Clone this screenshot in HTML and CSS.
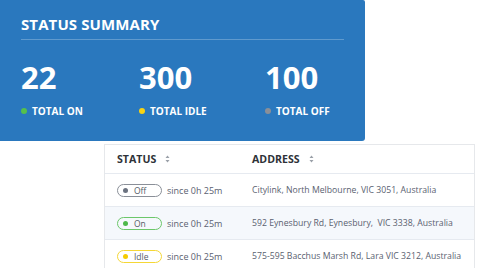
FILE: index.html
```html
<!DOCTYPE html>
<html>
<head>
<meta charset="utf-8">
<link rel="stylesheet" href="styles.css">
</head>
<body>
<section class="summary">
  <h1 class="summary-title">STATUS SUMMARY</h1>
  <div class="stats">
    <div class="stat">
      <div class="stat-value">22</div>
      <div class="stat-label"><span class="dot dot-on"></span>TOTAL ON</div>
    </div>
    <div class="stat">
      <div class="stat-value">300</div>
      <div class="stat-label"><span class="dot dot-idle"></span>TOTAL IDLE</div>
    </div>
    <div class="stat">
      <div class="stat-value">100</div>
      <div class="stat-label"><span class="dot dot-off"></span>TOTAL OFF</div>
    </div>
  </div>
</section>
<section class="table-card">
  <div class="row head">
    <div class="cell c-status">STATUS <span class="sort"><svg width="5" height="8" viewBox="0 0 5 8"><path d="M2.5 0.5 L4.5 3 L0.5 3 Z M2.5 7.5 L4.5 5 L0.5 5 Z" fill="#9aa0a8"/></svg></span></div>
    <div class="cell c-addr">ADDRESS <span class="sort"><svg width="5" height="8" viewBox="0 0 5 8"><path d="M2.5 0.5 L4.5 3 L0.5 3 Z M2.5 7.5 L4.5 5 L0.5 5 Z" fill="#9aa0a8"/></svg></span></div>
  </div>
  <div class="row">
    <div class="cell c-status"><span class="badge badge-off"><span class="bdot"></span>Off</span><span class="since">since 0h 25m</span></div>
    <div class="cell c-addr">Citylink, North Melbourne, VIC 3051, Australia</div>
  </div>
  <div class="row alt">
    <div class="cell c-status"><span class="badge badge-on"><span class="bdot"></span>On</span><span class="since">since 0h 25m</span></div>
    <div class="cell c-addr">592 Eynesbury Rd, Eynesbury,&nbsp; VIC 3338, Australia</div>
  </div>
  <div class="row">
    <div class="cell c-status"><span class="badge badge-idle"><span class="bdot"></span>Idle</span><span class="since">since 0h 25m</span></div>
    <div class="cell c-addr">575-595 Bacchus Marsh Rd, Lara VIC 3212, Australia</div>
  </div>
</section>
</body>
</html>
```
FILE: styles.css
```css
html, body {
  margin: 0;
  padding: 0;
  background: #ffffff;
  font-family: "Open Sans", "Noto Sans", sans-serif;
  width: 480px;
  height: 268px;
  overflow: hidden;
}
.summary {
  width: 365px;
  height: 141px;
  box-sizing: border-box;
  background: #2a78be;
  border-radius: 0 2px 3px 0;
  padding: 14px 21px 0 21px;
  color: #ffffff;
}
.summary-title {
  margin: 0;
  font-size: 15px;
  font-weight: 700;
  line-height: 20px;
  letter-spacing: 0.1px;
  padding-bottom: 5px;
  border-bottom: 1px solid rgba(255,255,255,0.25);
}
.stats {
  display: grid;
  grid-template-columns: 118px 126px auto;
  margin-top: 19px;
}
.stat-value {
  font-size: 31px;
  font-weight: 700;
  line-height: 36px;
}
.stat-label {
  display: flex;
  align-items: center;
  gap: 5px;
  font-size: 10px;
  font-weight: 700;
  margin-top: 10px;
  line-height: 12px;
}
.dot {
  width: 6px;
  height: 6px;
  border-radius: 50%;
  display: inline-block;
}
.dot-on { background: #56c04b; }
.dot-idle { background: #f8d313; }
.dot-off { background: #8a8f98; }

.table-card {
  margin: 3px 0 0 104px;
  width: 371px;
  box-sizing: border-box;
  border: 1px solid #e6e8eb;
  border-bottom: none;
  background: #ffffff;
  height: 124px;
}
.row {
  display: flex;
  align-items: center;
  height: 32px;
  border-top: 1px solid #e6eaf0;
  font-size: 8.7px;
  color: #5a6170;
}
.row.head {
  border-top: none;
  height: 28px;
  font-size: 10.6px;
  font-weight: 700;
  color: #2e3238;
}
.row.alt { background: #f5f8fc; }
.cell { display: flex; align-items: center; }
.c-status { width: 147px; padding-left: 12px; box-sizing: border-box; }
.c-addr { flex: 1; }
.sort { display: inline-flex; margin-left: 9px; }
.badge {
  display: inline-flex;
  align-items: center;
  box-sizing: border-box;
  width: 45px;
  height: 13px;
  border-radius: 7px;
  border: 1px solid #8a8f98;
  padding-left: 5px;
  font-size: 8.5px;
  color: #555c66;
}
.bdot {
  width: 5px;
  height: 5px;
  border-radius: 50%;
  margin-right: 6px;
  background: #6b7280;
}
.badge-on { border-color: #6cc76a; }
.badge-on .bdot { background: #4db84a; }
.badge-idle { border-color: #f5d736; }
.badge-idle .bdot { background: #f5cc00; }
.since { margin-left: 5px; font-size: 9px; }
```
